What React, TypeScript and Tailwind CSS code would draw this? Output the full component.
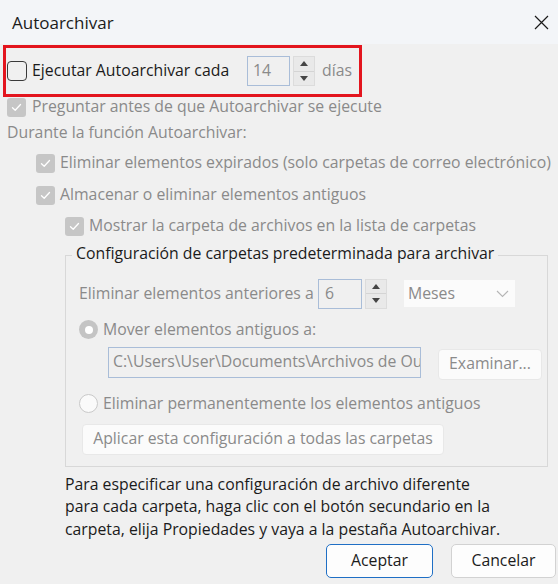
import React from "react";

function DisabledCheck() {
  return (
    <span className="flex h-[19px] w-[19px] shrink-0 items-center justify-center rounded-[3px] bg-[#c6c6c6]">
      <svg width="11" height="9" viewBox="0 0 11 9">
        <path d="M1.5 4.8 L4.2 7.3 L9.5 1.5" fill="none" stroke="#ffffff" strokeWidth="1.3" strokeLinecap="round" strokeLinejoin="round" />
      </svg>
    </span>
  );
}

function Spin() {
  return (
    <span className="flex h-[30px] w-[22px] shrink-0 flex-col border border-[#dcdcdc] bg-[#e9e9e9]">
      <span className="flex flex-1 items-center justify-center border-b border-[#d4d4d4]">
        <svg width="8" height="5" viewBox="0 0 8 5">
          <path d="M0 5 L4 0 L8 5Z" fill="#454545" />
        </svg>
      </span>
      <span className="flex flex-1 items-center justify-center">
        <svg width="8" height="5" viewBox="0 0 8 5">
          <path d="M0 0 L8 0 L4 5Z" fill="#454545" />
        </svg>
      </span>
    </span>
  );
}

function RadioChecked() {
  return (
    <span className="flex h-[19px] w-[19px] shrink-0 items-center justify-center rounded-full bg-[#c4c4c4]">
      <span className="h-[8px] w-[8px] rounded-full bg-[#ffffff]" />
    </span>
  );
}

function RadioEmpty() {
  return <span className="h-[19px] w-[19px] shrink-0 rounded-full border border-[#c9c9c9] bg-[#fafafa]" />;
}

export default function App() {
  return (
    <div className="h-[584px] w-[558px] overflow-hidden bg-[#f0f0f0] font-['Open_Sans','Noto_Sans',sans-serif] text-[15.8px] leading-none text-[#1b1b1b]">
      <div className="flex h-[44px] items-center justify-between bg-[#f3f5f8] pl-[12px] pr-[9px]">
        <span className="text-[17px]">Autoarchivar</span>
        <svg width="15" height="15" viewBox="0 0 15 15">
          <path d="M1 1 L14 14 M14 1 L1 14" stroke="#1a1a1a" strokeWidth="1.2" />
        </svg>
      </div>

      <div className="ml-[3px] mt-[1px] flex h-[52px] w-[359px] items-center border-[3px] border-[#e3151e] pl-[1px]">
        <span className="h-[20px] w-[20px] shrink-0 rounded-[4px] border border-[#3a3a3a]" />
        <span className="ml-[5px] w-[215px] shrink-0 whitespace-nowrap">Ejecutar Autoarchivar cada</span>
        <span className="flex h-[30px] w-[43px] shrink-0 items-center border border-[#a9bdd8] pl-[5px] text-[#8a8a8a]">14</span>
        <span className="ml-[3px]">
          <Spin />
        </span>
        <span className="ml-[7px] text-[#8a8a8a]">días</span>
      </div>

      <div className="flex h-[20px] items-center pl-[7px] text-[#8a8a8a]">
        <DisabledCheck />
        <span className="ml-[6px] whitespace-nowrap">Preguntar antes de que Autoarchivar se ejecute</span>
      </div>

      <div className="flex h-[32px] items-center pl-[7px] text-[#8a8a8a]">Durante la función Autoarchivar:</div>

      <div className="flex h-[28px] items-center pl-[36px] text-[#8a8a8a]">
        <DisabledCheck />
        <span className="ml-[5px] whitespace-nowrap">Eliminar elementos expirados (solo carpetas de correo electrónico)</span>
      </div>

      <div className="flex h-[36px] items-center pl-[36px] text-[#8a8a8a]">
        <DisabledCheck />
        <span className="ml-[5px] whitespace-nowrap">Almacenar o eliminar elementos antiguos</span>
      </div>

      <div className="flex h-[26px] items-center pl-[65px] text-[#8a8a8a]">
        <DisabledCheck />
        <span className="ml-[5px] whitespace-nowrap">Mostrar la carpeta de archivos en la lista de carpetas</span>
      </div>

      <fieldset className="ml-[65px] mt-[3px] w-[483px] border border-[#d8d8d8] pb-[11px]">
        <legend className="ml-[6px] whitespace-nowrap px-[4px] pb-[5px] leading-[22px] text-[#1b1b1b]">
          Configuración de carpetas predeterminada para archivar
        </legend>

        <div className="mt-[9.5px] flex items-center pl-[13px] text-[#8a8a8a]">
          <span className="w-[239px] shrink-0 whitespace-nowrap">Eliminar elementos anteriores a</span>
          <span className="flex h-[30px] w-[44px] shrink-0 items-center border border-[#a9bdd8] pl-[6px]">6</span>
          <span className="ml-[3px]">
            <Spin />
          </span>
          <span className="ml-[17px] flex h-[27px] w-[111px] shrink-0 items-center justify-between bg-[#fbfbfb] pl-[4px] pr-[6px]">
            <span>Meses</span>
            <svg width="13" height="8" viewBox="0 0 13 8">
              <path d="M1 1 L6.5 6.5 L12 1" fill="none" stroke="#b5b5b5" strokeWidth="1.1" />
            </svg>
          </span>
        </div>

        <div className="mt-[11px] flex h-[20px] items-center pl-[13px] text-[#8a8a8a]">
          <RadioChecked />
          <span className="ml-[5px] whitespace-nowrap">Mover elementos antiguos a:</span>
        </div>

        <div className="mt-[7px] flex items-start pl-[42px] text-[#8a8a8a]">
          <span className="flex h-[31px] w-[313px] shrink-0 items-center overflow-hidden whitespace-nowrap border border-[#a9bdd8] pl-[4px]">
            C:\Users\User\Documents\Archivos de Ou
          </span>
          <span className="ml-[17px] mt-[2px] flex h-[31px] w-[104px] shrink-0 items-center justify-center rounded-[4px] border border-[#e8e8e8] bg-[#fbfbfb]">
            Examinar...
          </span>
        </div>

        <div className="mt-[14px] flex h-[20px] items-center pl-[13px] text-[#8a8a8a]">
          <RadioEmpty />
          <span className="ml-[5px] whitespace-nowrap">Eliminar permanentemente los elementos antiguos</span>
        </div>

        <div className="mt-[10px] pl-[16px]">
          <span className="flex h-[31px] w-[362px] items-center justify-center whitespace-nowrap rounded-[4px] border border-[#e8e8e8] bg-[#fbfbfb] text-[#8a8a8a]">
            Aplicar esta configuración a todas las carpetas
          </span>
        </div>
      </fieldset>

      <p className="mt-[6px] whitespace-nowrap pl-[65px] leading-[22.5px]">
        Para especificar una configuración de archivo diferente
        <br />
        para cada carpeta, haga clic con el botón secundario en la
        <br />
        carpeta, elija Propiedades y vaya a la pestaña Autoarchivar.
      </p>

      <div className="mt-[4px] flex pl-[326px]">
        <button className="flex h-[34px] w-[107px] items-center justify-center rounded-[5px] border-[1.5px] border-[#1f6fc5] bg-[#fdfdfd] text-[#1b1b1b]">
          Aceptar
        </button>
        <button className="ml-[18px] flex h-[34px] w-[105px] items-center justify-center rounded-[5px] border border-[#d2d2d2] bg-[#fdfdfd] text-[#1b1b1b]">
          Cancelar
        </button>
      </div>
    </div>
  );
}
